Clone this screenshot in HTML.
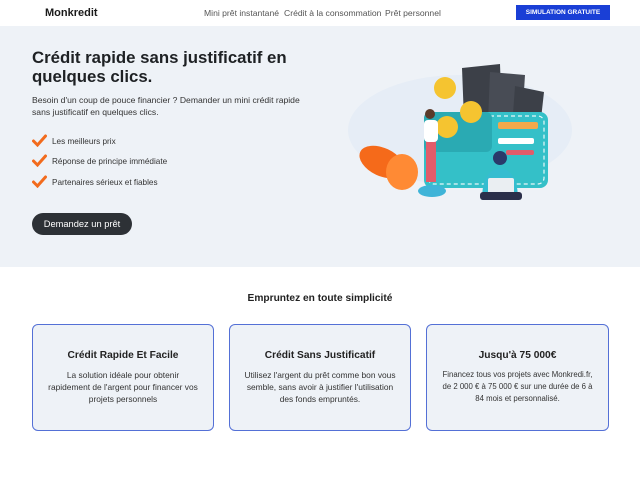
<!DOCTYPE html>
<html><head><meta charset="utf-8"><style>
*{margin:0;padding:0;box-sizing:border-box}
body{width:640px;height:480px;background:#fff;font-family:"Liberation Sans",Arial,sans-serif;color:#222;position:relative;overflow:hidden}
.hdr{position:absolute;left:0;top:0;width:640px;height:26px;background:#fff}
.logo{position:absolute;left:45px;top:7px;font-size:11px;font-weight:bold;color:#1a1a1a}
.nav{position:absolute;top:8px;font-size:8.6px;color:#555}
.sim{position:absolute;left:516px;top:5px;width:94px;height:15px;background:#1a3fd6;color:#fff;font-size:6.5px;font-weight:bold;text-align:center;line-height:15px}
.hero{position:absolute;left:0;top:26px;width:640px;height:241px;background:#eef2f7}
h1{position:absolute;left:32px;top:49px;font-size:16.8px;line-height:18.5px;font-weight:bold;color:#1e2124}
.p{position:absolute;left:32px;top:94px;font-size:8.6px;line-height:12px;color:#333;width:280px}
.li{position:absolute;left:32px;font-size:8.2px;color:#333}
.li svg{position:absolute;left:0;top:-3px}
.li span{position:absolute;left:20px;top:0;white-space:nowrap}
.btn{position:absolute;left:32px;top:213px;width:100px;height:22px;border-radius:11px;background:#2d3136;color:#fff;font-size:9.3px;text-align:center;line-height:22px}
.h2{position:absolute;left:0;width:640px;top:293px;text-align:center;font-size:10.2px;font-weight:bold;color:#222}
.card{position:absolute;top:324px;height:107px;border:1.5px solid #5470d6;border-radius:6px;background:#eef2f7;text-align:center}
.card b{display:block;margin-top:25px;font-size:10.2px;color:#222}
.card p{margin:8px 14px 0;font-size:8.4px;line-height:12px;color:#333}
</style></head><body>
<div class="hdr">
<div class="logo">Monkredit</div>
<div class="nav" style="left:204px">Mini prêt instantané</div>
<div class="nav" style="left:284px">Crédit à la consommation</div>
<div class="nav" style="left:385px">Prêt personnel</div>
<div class="sim">SIMULATION GRATUITE</div>
</div>
<div class="hero">
<svg style="position:absolute;left:340px;top:24px" width="240" height="160" viewBox="0 0 240 160">
<ellipse cx="120" cy="80" rx="112" ry="55" fill="#e6edf6"/>
<polygon points="122,18 160,14 162,70 124,70" fill="#3c4048"/>
<polygon points="150,22 185,25 182,72 148,72" fill="#484c55"/>
<polygon points="175,36 204,42 200,78 172,78" fill="#3c4048"/>
<rect x="84" y="62" width="124" height="76" rx="8" fill="#34c0c8"/>
<rect x="88" y="66" width="116" height="68" rx="6" fill="none" stroke="#e8f7f8" stroke-width="1.2" stroke-dasharray="4 3"/>
<rect x="84" y="62" width="68" height="40" rx="6" fill="#2aaab3"/>
<rect x="158" y="72" width="40" height="7" rx="2" fill="#f2a94a"/>
<rect x="158" y="88" width="36" height="6" rx="2" fill="#fff"/>
<rect x="166" y="100" width="28" height="5" rx="2" fill="#e25c6a"/>
<circle cx="105" cy="38" r="11" fill="#f5c430"/>
<circle cx="131" cy="62" r="11" fill="#f5c430"/>
<circle cx="107" cy="77" r="11" fill="#f5c430"/>
<ellipse cx="42" cy="112" rx="24" ry="14" fill="#f56a1a" transform="rotate(25 42 112)"/>
<ellipse cx="62" cy="122" rx="16" ry="18" fill="#ff8a34"/>
<rect x="86" y="88" width="10" height="44" fill="#e25c6a"/>
<rect x="84" y="70" width="14" height="22" rx="4" fill="#fff"/>
<circle cx="90" cy="64" r="5" fill="#5a3a2a"/>
<ellipse cx="92" cy="141" rx="14" ry="6" fill="#3fb4d8"/>
<circle cx="160" cy="108" r="7" fill="#2a3a6a"/>
<path d="M142 150 Q142 120 160 118 Q178 120 178 150 Z" fill="#35bdd0"/>
<rect x="148" y="128" width="26" height="18" rx="2" fill="#eaeef2"/>
<rect x="140" y="142" width="42" height="8" rx="3" fill="#2b2f4a"/>
</svg>
</div>
<h1>Crédit rapide sans justificatif en<br>quelques clics.</h1>
<div class="p">Besoin d'un coup de pouce financier ? Demander un mini crédit rapide sans justificatif en quelques clics.</div>
<div class="li" style="top:137px"><svg width="15" height="13" viewBox="0 0 15 13"><path d="M1.5 7 L5.5 11 L13.5 2" fill="none" stroke="#f26b1d" stroke-width="3" stroke-linecap="round"/></svg><span>Les meilleurs prix</span></div>
<div class="li" style="top:157px"><svg width="15" height="13" viewBox="0 0 15 13"><path d="M1.5 7 L5.5 11 L13.5 2" fill="none" stroke="#f26b1d" stroke-width="3" stroke-linecap="round"/></svg><span>Réponse de principe immédiate</span></div>
<div class="li" style="top:178px"><svg width="15" height="13" viewBox="0 0 15 13"><path d="M1.5 7 L5.5 11 L13.5 2" fill="none" stroke="#f26b1d" stroke-width="3" stroke-linecap="round"/></svg><span>Partenaires sérieux et fiables</span></div>
<div class="btn">Demandez un prêt</div>
<div class="h2">Empruntez en toute simplicité</div>
<div class="card" style="left:32px;width:182px"><b>Crédit Rapide Et Facile</b><p>La solution idéale pour obtenir rapidement de l'argent pour financer vos projets personnels</p></div>
<div class="card" style="left:229px;width:182px"><b>Crédit Sans Justificatif</b><p>Utilisez l'argent du prêt comme bon vous semble, sans avoir à justifier l'utilisation des fonds empruntés.</p></div>
<div class="card" style="left:426px;width:183px"><b>Jusqu'à 75 000€</b><p style="font-size:7.8px">Financez tous vos projets avec Monkredi.fr, de 2 000 € à 75 000 € sur une durée de 6 à 84 mois et personnalisé.</p></div>
</body></html>
